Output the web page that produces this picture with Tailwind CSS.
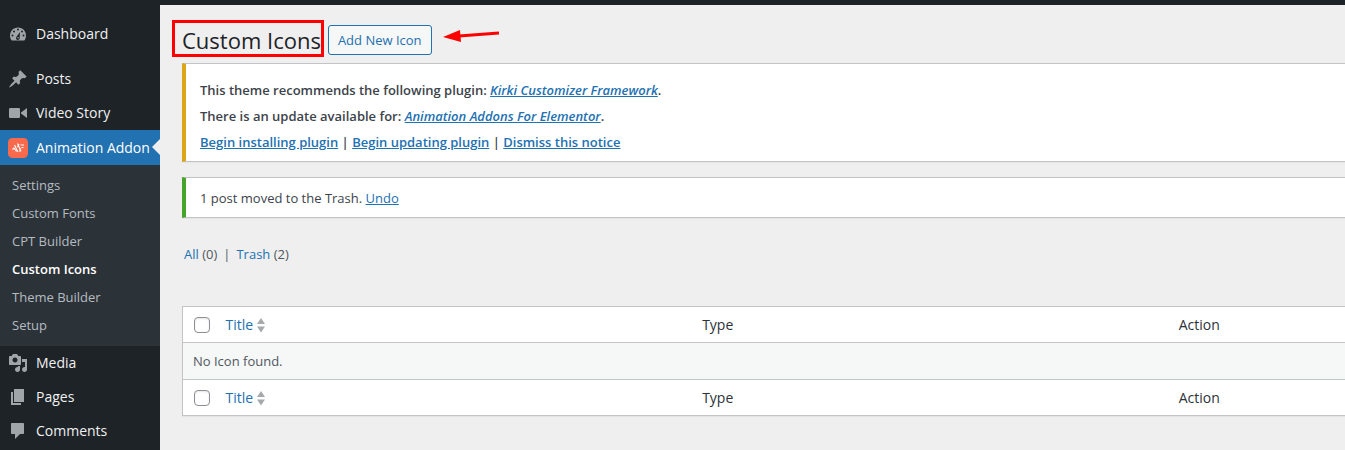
<!DOCTYPE html>
<html lang="en">
  <head>
    <meta charset="UTF-8" />
    <title>Custom Icons</title>
    <script src="https://cdn.jsdelivr.net/npm/@tailwindcss/browser@4"></script>
    <meta name="viewport" content="width=device-width, initial-scale=1.0" />
  </head>
  <body class="min-h-screen flex flex-col overflow-hidden bg-[#efefef] font-['Open_Sans',sans-serif] text-[13px] leading-5 text-[#3c434a]">
    <!-- Admin bar -->
    <header class="h-[5px] bg-[#1d2327]"></header>

    <div class="flex flex-1">
      <!-- Admin menu -->
      <nav class="w-40 shrink-0 bg-[#1d2327] pt-3 text-sm text-[#f0f0f1]" aria-label="Main menu">
        <a href="#" class="flex h-[34px] items-center gap-2 pl-2">
          <svg class="size-5 shrink-0 text-[#a0a5aa]" viewBox="0 0 20 20" fill="currentColor" aria-hidden="true">
            <path d="M3.76 16.500h12.480C17.340 15.130 18 13.390 18 11.500c0-4.410-3.580-8-8-8s-8 3.590-8 8c0 1.890.66 3.630 1.760 5z" />
            <g fill="#1d2327">
              <circle cx="10" cy="5.500" r="1" />
              <circle cx="6" cy="7.500" r="1" />
              <circle cx="14" cy="7.500" r="1" />
              <circle cx="4.500" cy="11.500" r="1" />
              <circle cx="15.500" cy="11.500" r="1" />
              <path d="M12 8l-.3 5.600a1.900 1.900 0 1 1-3-1z" />
            </g>
            <circle cx="10" cy="13.800" r=".8" />
          </svg>
          Dashboard
        </a>
        <a href="#" class="mt-[11px] flex h-[34px] items-center gap-2 pl-2">
          <svg class="size-5 shrink-0 text-[#a0a5aa]" viewBox="0 0 20 20" fill="currentColor" aria-hidden="true">
            <path d="M10.44 3.02l1.82-1.82 6.36 6.35-1.83 1.82c-1.05-.68-2.48-.57-3.41.36l-.75.75c-.92.93-1.04 2.35-.35 3.41l-1.83 1.82-2.41-2.41-2.8 2.79c-.42.42-3.38 2.71-3.8 2.29s1.86-3.39 2.28-3.81l2.79-2.79L4.1 9.36l1.83-1.82c1.05.69 2.48.57 3.4-.36l.75-.75c.93-.92 1.05-2.35.36-3.41z" />
          </svg>
          Posts
        </a>
        <a href="#" class="flex h-[34px] items-center gap-2 pl-2">
          <svg class="size-5 shrink-0 text-[#a0a5aa]" viewBox="0 0 20 20" fill="currentColor" aria-hidden="true">
            <path d="M12 13.500V6.500C12 5.500 11.500 5 10.500 5H2.500C1.500 5 1 5.500 1 6.500v7c0 1 .5 1.500 1.500 1.500h8c1 0 1.500-.5 1.500-1.500zm1-3l6 4.500V5l-6 4.500v1z" />
          </svg>
          Video Story
        </a>
        <a href="#" class="relative flex h-[35px] items-center gap-2 bg-[#2271b1] pl-2 text-white">
          <svg class="size-5 shrink-0" viewBox="0 0 20 20" aria-hidden="true">
            <rect width="20" height="20" rx="4.500" fill="#f9694c" />
            <path d="M4.500 11.500l1.500-1.500 2.500 3.500M6.500 7l3.500 7M9.500 5.500l3.500 8M9.500 9l1.500-3M11.500 13.500l1.500-3M12.500 7h3.500M13.500 9.500h2" fill="none" stroke="#fff" stroke-width="1.100" />
          </svg>
          <span class="whitespace-nowrap">Animation Addon</span>
          <span class="absolute right-0 top-[9px] border-y-8 border-r-8 border-y-transparent border-r-[#efefef]"></span>
        </a>

        <!-- Submenu -->
        <div class="flex flex-col bg-[#2c3338] pt-[6px] pb-[7px] text-[13px] text-[#b5bbc1]">
          <a href="#" class="flex h-7 items-center pl-3">Settings</a>
          <a href="#" class="flex h-7 items-center pl-3">Custom Fonts</a>
          <a href="#" class="flex h-7 items-center pl-3">CPT Builder</a>
          <a href="#" class="flex h-7 items-center pl-3 font-semibold text-white" aria-current="page">Custom Icons</a>
          <a href="#" class="flex h-7 items-center pl-3">Theme Builder</a>
          <a href="#" class="flex h-7 items-center pl-3">Setup</a>
        </div>

        <a href="#" class="flex h-[34px] items-center gap-2 pl-2">
          <svg class="size-5 shrink-0 text-[#a0a5aa]" viewBox="0 0 20 20" fill="currentColor" aria-hidden="true">
            <path fill-rule="evenodd" d="M13 11V4c0-.55-.45-1-1-1h-1.67L9 1H5L3.67 3H2c-.55 0-1 .45-1 1v7c0 .55.45 1 1 1h10c.55 0 1-.45 1-1zM7 4.500c1.380 0 2.500 1.120 2.500 2.500S8.380 9.500 7 9.500 4.500 8.380 4.500 7 5.620 4.500 7 4.500zM14 6h5v10.500c0 1.380-1.120 2.500-2.500 2.500S14 17.880 14 16.500s1.120-2.500 2.500-2.500c.17 0 .34.02.5.05V9h-3V6zm-4 8.050V13h2v3.500c0 1.380-1.120 2.500-2.500 2.500S7 17.880 7 16.500 8.120 14 9.500 14c.17 0 .34.02.5.05z" />
          </svg>
          Media
        </a>
        <a href="#" class="flex h-[34px] items-center gap-2 pl-2">
          <svg class="size-5 shrink-0 text-[#a0a5aa]" viewBox="0 0 20 20" fill="currentColor" aria-hidden="true">
            <path d="M6 15V2h10v13H6zm-1 1h8v2H3V5h2v11z" />
          </svg>
          Pages
        </a>
        <a href="#" class="flex h-[34px] items-center gap-2 pl-2">
          <svg class="size-5 shrink-0 text-[#a0a5aa]" viewBox="0 0 20 20" fill="currentColor" aria-hidden="true">
            <path d="M4 2h11c.7 0 1 .3 1 1v9c0 .7-.3 1-1 1h-3l-5 5v-5H4c-.7 0-1-.3-1-1V3c0-.7.3-1 1-1z" />
          </svg>
          Comments
        </a>
      </nav>

      <!-- Page content -->
      <main class="min-w-0 flex-1 pl-[22px] pt-5">
        <div class="flex items-center">
          <h1 class="relative mr-[7px] text-[22px] leading-[30px] text-[#1d2327]">
            Custom Icons
            <span class="absolute -left-[10px] -right-[3px] -top-[5px] h-[37px] border-3 border-[#fe0000]"></span>
          </h1>
          <button type="button" class="h-[30px] rounded-[3px] border border-[#2271b1] bg-[#f6f7f7] px-[9px] text-[#2271b1]">Add New Icon</button>
          <svg class="ml-[11px] mt-[2px] h-4 w-14 self-start" viewBox="0 0 56 16" aria-hidden="true">
            <path d="M16 9L56 6" stroke="#fe0000" stroke-width="3" />
            <path d="M0 10L17 3l1 12z" fill="#fe0000" />
          </svg>
        </div>

        <!-- Plugin notice -->
        <div class="mt-2 flex flex-col gap-[6px] border border-r-0 border-l-4 border-[#c3c4c7] border-l-[#dba617] bg-white pt-4 pb-[9px] pl-[14px] font-semibold shadow-[0_1px_1px_rgba(0,0,0,0.04)]">
          <p>This theme recommends the following plugin: <a href="#" class="italic text-[#2271b1] underline">Kirki Customizer Framework</a>.</p>
          <p>There is an update available for: <a href="#" class="italic text-[#2271b1] underline">Animation Addons For Elementor</a>.</p>
          <p><a href="#" class="text-[#2271b1] underline">Begin installing plugin</a> | <a href="#" class="text-[#2271b1] underline">Begin updating plugin</a> | <a href="#" class="text-[#2271b1] underline">Dismiss this notice</a></p>
        </div>

        <!-- Trash notice -->
        <div class="mt-[15px] border border-r-0 border-l-4 border-[#c3c4c7] border-l-[#46a42c] bg-white pt-[10px] pb-[9px] pl-[14px] shadow-[0_1px_1px_rgba(0,0,0,0.04)]">
          <p>1 post moved to the Trash. <a href="#" class="text-[#2271b1] underline">Undo</a></p>
        </div>

        <!-- Status filters -->
        <ul class="mt-[26px] flex pl-[2px] text-[#50575e]">
          <li><a href="#" class="text-[#2271b1]">All <span class="text-[#50575e]">(0)</span></a></li>
          <li class="px-[6px]">|</li>
          <li><a href="#" class="text-[#2271b1]">Trash <span class="text-[#50575e]">(2)</span></a></li>
        </ul>

        <!-- Icons table -->
        <table class="mt-[42px] w-full table-fixed border-collapse border border-r-0 border-[#c3c4c7] bg-white text-left shadow-[0_1px_1px_rgba(0,0,0,0.04)]">
          <colgroup>
            <col class="w-[33px]" />
            <col class="w-[41%]" />
            <col class="w-[41%]" />
            <col />
          </colgroup>
          <thead class="text-sm leading-5 text-[#2c3338]">
            <tr class="h-9">
              <td class="pl-[11px]">
                <input type="checkbox" aria-label="Select all" class="block size-4 appearance-none rounded-[4px] border border-[#8c8f94] bg-white shadow-[inset_0_1px_2px_rgba(0,0,0,0.1)]" />
              </td>
              <th scope="col" class="pl-[10px] font-normal">
                <a href="#" class="flex items-center gap-1 text-[#2271b1]">
                  Title
                  <svg class="h-4 w-2" viewBox="0 0 8 16" fill="#a7aaad" aria-hidden="true">
                    <path d="M0 7L4 1l4 6zM0 9.500h8l-4 6z" />
                  </svg>
                </a>
              </th>
              <th scope="col" class="pl-[10px] font-normal">Type</th>
              <th scope="col" class="pl-[10px] font-normal">Action</th>
            </tr>
          </thead>
          <tbody>
            <tr class="h-[37px] border-y border-[#c3c4c7] bg-[#f6f7f7] text-[#50575e]">
              <td colspan="4" class="pl-[10px]">No Icon found.</td>
            </tr>
          </tbody>
          <tfoot class="text-sm leading-5 text-[#2c3338]">
            <tr class="h-9">
              <td class="pl-[11px]">
                <input type="checkbox" aria-label="Select all" class="block size-4 appearance-none rounded-[4px] border border-[#8c8f94] bg-white shadow-[inset_0_1px_2px_rgba(0,0,0,0.1)]" />
              </td>
              <th scope="col" class="pl-[10px] font-normal">
                <a href="#" class="flex items-center gap-1 text-[#2271b1]">
                  Title
                  <svg class="h-4 w-2" viewBox="0 0 8 16" fill="#a7aaad" aria-hidden="true">
                    <path d="M0 7L4 1l4 6zM0 9.500h8l-4 6z" />
                  </svg>
                </a>
              </th>
              <th scope="col" class="pl-[10px] font-normal">Type</th>
              <th scope="col" class="pl-[10px] font-normal">Action</th>
            </tr>
          </tfoot>
        </table>
      </main>
    </div>
  </body>
</html>
